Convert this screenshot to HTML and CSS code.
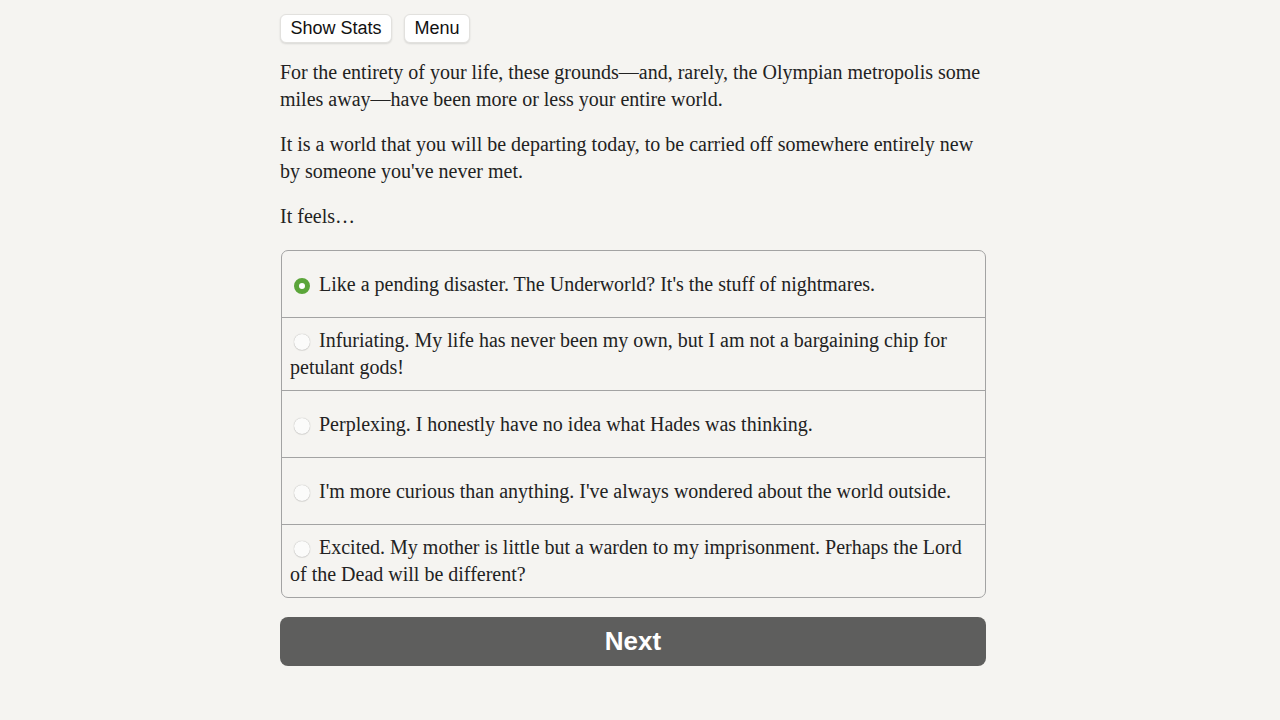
FILE: index.html
```
<!DOCTYPE html>
<html>
<head>
<meta charset="utf-8">
<link rel="stylesheet" href="styles.css">
</head>
<body>
<div class="page">
  <div class="topbar">
    <button class="btn">Show Stats</button>
    <button class="btn">Menu</button>
  </div>
  <div class="text">
    <p>For the entirety of your life, these grounds—and, rarely, the Olympian metropolis some miles away—have been more or less your entire world.</p>
    <p>It is a world that you will be departing today, to be carried off somewhere entirely new by someone you've never met.</p>
    <p>It feels…</p>
  </div>
  <div class="choices">
    <div class="choice"><span class="label"><span class="radio checked"></span>Like a pending disaster. The Underworld? It's the stuff of nightmares.</span></div>
    <div class="choice"><span class="label"><span class="radio"></span>Infuriating. My life has never been my own, but I am not a bargaining chip for petulant gods!</span></div>
    <div class="choice"><span class="label"><span class="radio"></span>Perplexing. I honestly have no idea what Hades was thinking.</span></div>
    <div class="choice"><span class="label"><span class="radio"></span>I'm more curious than anything. I've always wondered about the world outside.</span></div>
    <div class="choice"><span class="label"><span class="radio"></span>Excited. My mother is little but a warden to my imprisonment. Perhaps the Lord of the Dead will be different?</span></div>
  </div>
  <button class="next">Next</button>
</div>
</body>
</html>
```
FILE: styles.css
```
html, body {
  margin: 0;
  padding: 0;
  background: #f5f4f1;
}
body {
  padding-right: 14px;
  font-family: "Liberation Serif", serif;
  color: #222;
}
.page {
  width: 706px;
  margin: 0 auto;
  padding-top: 14px;
}
.topbar {
  display: flex;
  gap: 12px;
}
.btn {
  font-family: "Liberation Sans", Arial, sans-serif;
  font-size: 18px;
  color: #111;
  background: #fff;
  border: 1px solid #e2e1de;
  border-radius: 6px;
  height: 29px;
  padding: 0 9.5px;
  box-shadow: 0 1px 2px rgba(0,0,0,0.12);
}
.text {
  margin-top: 16px;
  font-size: 20px;
  line-height: 27px;
}
.text p {
  margin: 0 0 18px 0;
}
.choices {
  margin-top: 20px;
  border: 1px solid #a3a3a3;
  border-radius: 7px;
  margin-left: 1px;
  font-size: 20px;
  line-height: 27px;
}
.choice {
  display: flex;
  align-items: center;
  min-height: 67px;
  box-sizing: border-box;
  padding: 9px 10px 9px 8px;
  border-top: 1px solid #a3a3a3;
}
.choice:first-child {
  border-top: none;
  min-height: 66px;
}
.radio {
  display: inline-block;
  width: 16px;
  height: 16px;
  border-radius: 50%;
  background: #fbfbfa;
  box-shadow: 0 0 1px rgba(0,0,0,0.35), 0 1px 1px rgba(0,0,0,0.08);
  vertical-align: -3px;
  margin: 0 9px 0 4px;
  box-sizing: border-box;
}
.radio.checked {
  background: #fff;
  border: 5px solid #5ba53a;
  box-shadow: none;
}
.next {
  display: block;
  width: 706px;
  height: 49px;
  margin-top: 19px;
  background: #5e5e5d;
  color: #fff;
  border: none;
  border-radius: 8px;
  font-family: "Liberation Sans", Arial, sans-serif;
  font-weight: bold;
  font-size: 26px;
}
```
